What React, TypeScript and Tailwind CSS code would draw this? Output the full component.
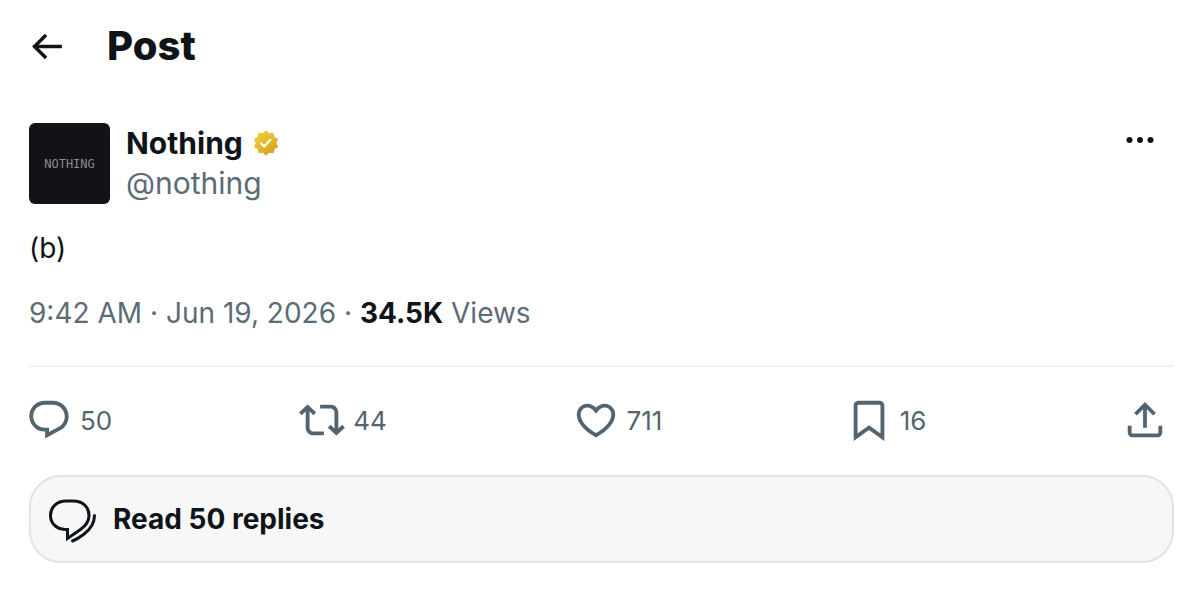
import type { ReactNode } from "react";

const post = {
  name: "Nothing",
  handle: "@nothing",
  text: "(b)",
  time: "9:42 AM",
  date: "Jun 19, 2026",
  views: "34.5K",
};

const actions = [
  {
    label: "Reply",
    count: "50",
    d: "M1.751 10c0-4.42 3.584-8 8.005-8h4.366c4.49 0 8.129 3.64 8.129 8.13 0 2.96-1.607 5.68-4.196 7.11l-8.054 4.46v-3.69h-.067c-4.49.1-8.183-3.51-8.183-8.01zm8.005-6c-3.317 0-6.005 2.69-6.005 6 0 3.37 2.77 6.08 6.138 6.01l.351-.01h1.761v2.3l5.087-2.81c1.951-1.08 3.163-3.13 3.163-5.36 0-3.39-2.744-6.13-6.129-6.13H9.756z",
  },
  {
    label: "Repost",
    count: "44",
    d: "M4.5 3.88l4.432 4.14-1.364 1.46L5.5 7.55V16c0 1.1.896 2 2 2H13v2H7.5c-2.209 0-4-1.79-4-4V7.55L1.432 9.48.068 8.02 4.5 3.88zM16.5 6H11V4h5.5c2.209 0 4 1.79 4 4v8.45l2.068-1.93 1.364 1.46-4.432 4.14-4.432-4.14 1.364-1.46 2.068 1.93V8c0-1.1-.896-2-2-2z",
  },
  {
    label: "Like",
    count: "711",
    d: "M16.697 5.5c-1.222-.06-2.679.51-3.89 2.16l-.805 1.09-.806-1.09C9.984 6.01 8.526 5.44 7.304 5.5c-1.243.07-2.349.78-2.91 1.91-.552 1.12-.633 2.78.479 4.82 1.074 1.97 3.257 4.27 7.129 6.61 3.87-2.34 6.052-4.64 7.126-6.61 1.111-2.04 1.03-3.7.477-4.82-.561-1.13-1.666-1.84-2.908-1.91zm4.187 7.69c-1.351 2.48-4.001 5.12-8.379 7.67l-.503.3-.504-.3c-4.379-2.55-7.029-5.19-8.382-7.67-1.36-2.5-1.41-4.86-.514-6.67.887-1.79 2.647-2.91 4.601-3.01 1.651-.09 3.368.56 4.798 2.01 1.429-1.45 3.146-2.1 4.796-2.01 1.954.1 3.714 1.22 4.601 3.01.896 1.81.846 4.17-.514 6.67z",
  },
  {
    label: "Bookmark",
    count: "16",
    d: "M4 4.5C4 3.12 5.119 2 6.5 2h11C18.881 2 20 3.12 20 4.5v18.44l-8-5.71-8 5.71V4.5zM6.5 4c-.276 0-.5.22-.5.5v14.56l6-4.29 6 4.29V4.5c0-.28-.224-.5-.5-.5h-11z",
  },
];

interface IconProps {
  className: string;
  viewBox?: string;
  children: ReactNode;
}

function Icon({ className, viewBox = "0 0 24 24", children }: IconProps) {
  return (
    <svg viewBox={viewBox} className={`shrink-0 ${className}`} fill="currentColor" aria-hidden="true">
      {children}
    </svg>
  );
}

function GoldBadge() {
  return (
    <Icon className="size-[30px]" viewBox="0 0 22 22">
      <defs>
        <linearGradient id="gold" x1="4" y1="2" x2="18" y2="20" gradientUnits="userSpaceOnUse">
          <stop offset="0" stopColor="#edcf3c" />
          <stop offset="0.55" stopColor="#e2b92b" />
          <stop offset="1" stopColor="#cb9420" />
        </linearGradient>
      </defs>
      <path
        fill="url(#gold)"
        d="M13.324 3.848L11 1.6 8.676 3.848l-3.201-.453-.559 3.184L2.06 8.095 3.48 11l-1.42 2.904 2.856 1.516.559 3.184 3.201-.452L11 20.4l2.324-2.248 3.201.452.559-3.184 2.856-1.516L18.52 11l1.42-2.905-2.856-1.516-.559-3.184z"
      />
      <path fill="none" stroke="#fffbe8" strokeWidth="1.6" d="M6.9 10.8l2.75 2.7 5-5.5" />
    </Icon>
  );
}

export default function App() {
  return (
    <main className="bg-white pt-5 pr-[26px] pb-[29px] pl-[29px] font-['Inter','Liberation_Sans',sans-serif] text-[#0f1419]">
      <header className="flex items-center gap-10">
        <button type="button" aria-label="Back" className="-ml-[3px]">
          <Icon className="size-[41px]">
            <path d="M7.414 13l5.043 5.04-1.414 1.42L3.586 12l7.457-7.46 1.414 1.42L7.414 11H21v2H7.414z" />
          </Icon>
        </button>
        <h1 className="text-[40px] leading-[52px] font-extrabold">Post</h1>
      </header>

      <article className="mt-[51px]">
        <div className="flex items-start">
          <div className="flex size-[81px] shrink-0 items-center justify-center rounded-md bg-[#131217] font-['DejaVu_Sans_Mono',monospace] text-xs text-[#8b8b8e]">
            NOTHING
          </div>
          <div className="ml-4 text-[30px] leading-10">
            <div className="flex items-center gap-2">
              <span className="font-bold">{post.name}</span>
              <GoldBadge />
            </div>
            <div className="text-[#5b6b78]">{post.handle}</div>
          </div>
          <button type="button" aria-label="More" className="-mt-px mr-4 ml-auto">
            <Icon className="size-9">
              <circle cx="5" cy="12" r="2" />
              <circle cx="12" cy="12" r="2" />
              <circle cx="19" cy="12" r="2" />
            </Icon>
          </button>
        </div>

        <p className="mt-6 text-[28px] leading-10">{post.text}</p>

        <div className="mt-[25px] text-[28px] leading-10 text-[#5b6b78]">
          <time>
            {post.time} · {post.date}
          </time>
          {" · "}
          <span className="font-bold text-[#0f1419]">{post.views}</span> Views
        </div>

        <div className="mt-8 flex border-t-2 border-[#eff1f2] pt-[30px] text-[#536471]">
          {actions.map((action) => (
            <div key={action.label} className="flex-1">
              <button type="button" aria-label={action.label} className="-ml-[3px] flex items-center gap-2 text-[26px]">
                <Icon className="size-[46px]">
                  <path d={action.d} />
                </Icon>
                <span>{action.count}</span>
              </button>
            </div>
          ))}
          <button type="button" aria-label="Share" className="mr-1.5">
            <Icon className="size-[46px]">
              <path d="M12 2.59l5.7 5.7-1.41 1.42L13 6.41V16h-2V6.41l-3.3 3.3-1.41-1.42L12 2.59zM21 15l-.02 3.51c0 1.38-1.12 2.49-2.5 2.49H5.5C4.11 21 3 19.88 3 18.5V15h2v3.5c0 .28.22.5.5.5h12.98c.28 0 .5-.22.5-.5L19 15h2z" />
            </Icon>
          </button>
        </div>
      </article>

      <button
        type="button"
        className="mt-8 flex h-[88px] w-full items-center gap-3.5 rounded-[32px] border-2 border-[#e1e2e3] bg-[#f7f7f7] px-3.5 text-[28px] font-bold"
      >
        <Icon className="size-[54px]" viewBox="0 -3 54 54">
          <g fill="none" stroke="currentColor" strokeWidth="3">
            <path d="M21 6h7C38 6 44 12 44 20.5C44 27 40.500 31 35.500 34.500L22.500 43.500V34.500H20C11 34 5.500 28 5.500 20.500C5.500 12 12 6 21 6Z" />
            <path strokeLinecap="round" d="M49.500 20.500C49.500 28 46 34 38.500 39.500C34.500 42.500 31 44.500 27.500 46" />
          </g>
        </Icon>
        Read 50 replies
      </button>
    </main>
  );
}
